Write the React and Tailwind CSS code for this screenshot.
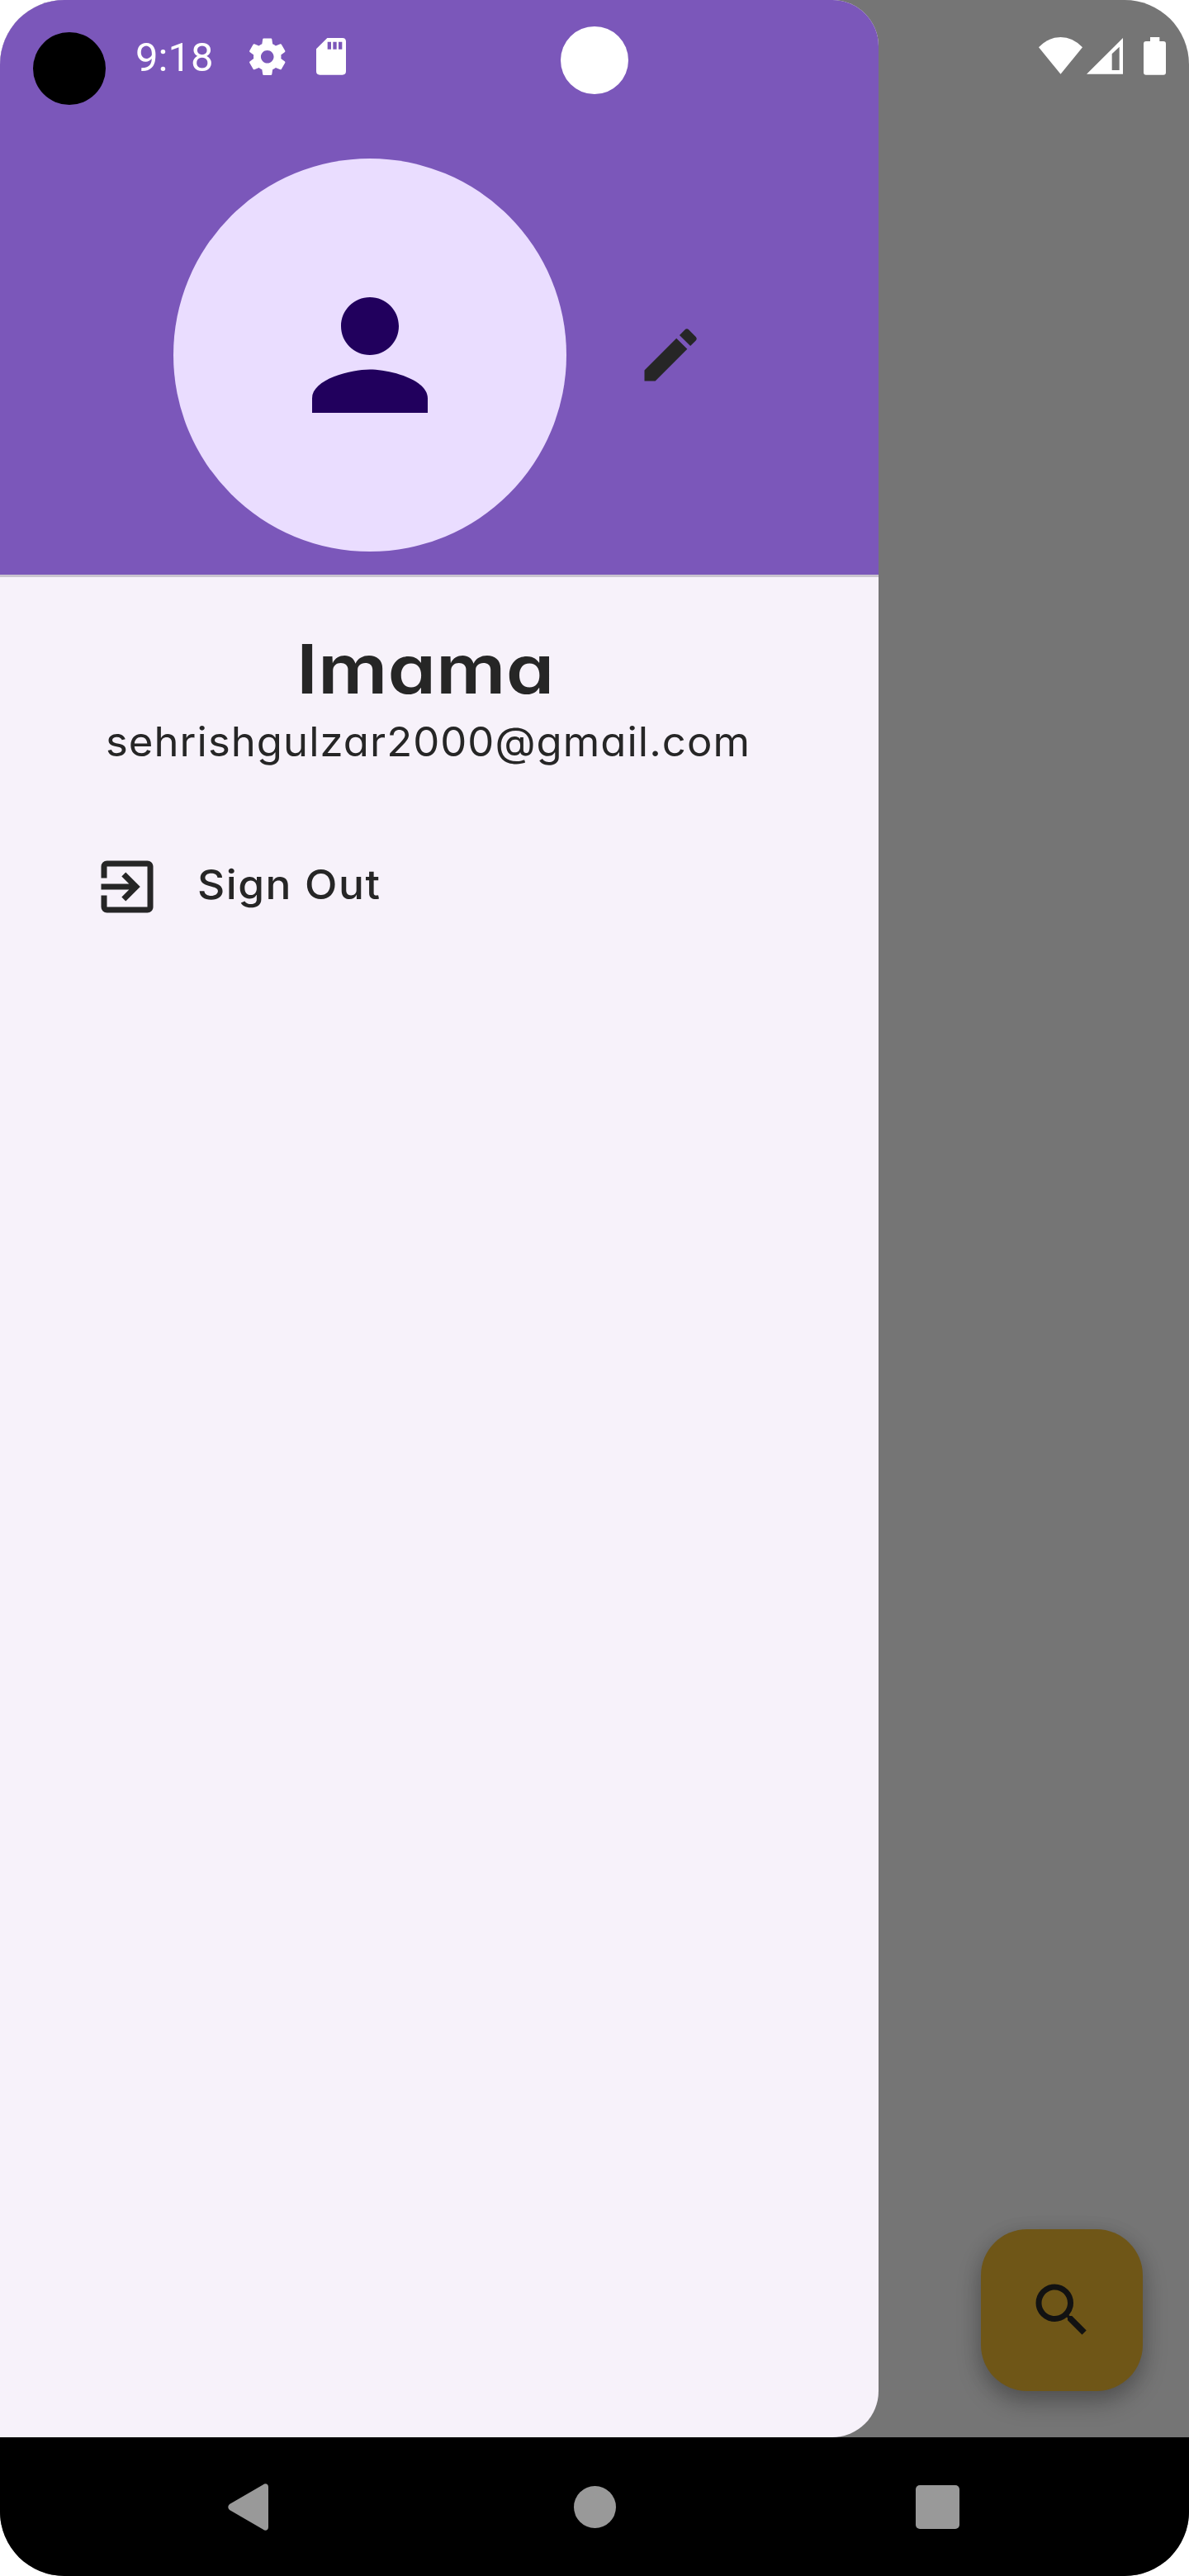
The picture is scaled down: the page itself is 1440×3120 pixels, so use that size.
const Icon = ({ d, className }) => (
  <svg viewBox="0 0 24 24" className={className} fill="currentColor" aria-hidden="true">
    <path d={d} />
  </svg>
);

const paths = {
  person:
    "M12 12c2.21 0 4-1.79 4-4s-1.79-4-4-4-4 1.79-4 4 1.79 4 4 4zm0 2c-2.67 0-8 1.34-8 4v2h16v-2c0-2.66-5.33-4-8-4z",
  edit: "M3 17.25V21h3.75L17.81 9.94l-3.75-3.75L3 17.25zM20.71 7.04a.996.996 0 0 0 0-1.41l-2.34-2.34a.996.996 0 0 0-1.41 0l-1.83 1.83 3.75 3.75 1.83-1.83z",
  exit: "M10.09 15.59L11.5 17l5-5-5-5-1.41 1.41L12.67 11H3v2h9.67l-2.58 2.59zM19 3H5a2 2 0 0 0-2 2v4h2V5h14v14H5v-4H3v4a2 2 0 0 0 2 2h14c1.1 0 2-.9 2-2V5c0-1.1-.9-2-2-2z",
  search:
    "M15.5 14h-.79l-.28-.27A6.471 6.471 0 0 0 16 9.5 6.5 6.5 0 1 0 9.5 16c1.61 0 3.09-.59 4.23-1.57l.27.28v.79l5 4.99L20.49 19l-4.99-5zm-6 0C7.01 14 5 11.99 5 9.5S7.01 5 9.5 5 14 7.01 14 9.5 11.99 14 9.5 14z",
  gear: "M19.43 12.98c.04-.32.07-.64.07-.98s-.03-.66-.07-.98l2.11-1.65c.19-.15.24-.42.12-.64l-2-3.46c-.12-.22-.39-.3-.61-.22l-2.49 1c-.52-.4-1.08-.73-1.69-.98l-.38-2.65A.488.488 0 0 0 14 2h-4c-.25 0-.46.18-.49.42l-.38 2.65c-.61.25-1.17.59-1.69.98l-2.49-1c-.23-.09-.49 0-.61.22l-2 3.46c-.13.22-.07.49.12.64l2.11 1.65c-.04.32-.07.65-.07.98s.03.66.07.98l-2.11 1.65c-.19.15-.24.42-.12.64l2 3.46c.12.22.39.3.61.22l2.49-1c.52.4 1.08.73 1.69.98l.38 2.65c.03.24.24.42.49.42h4c.25 0 .46-.18.49-.42l.38-2.65c.61-.25 1.17-.59 1.69-.98l2.49 1c.23.09.49 0 .61-.22l2-3.46c.12-.22.07-.49-.12-.64l-2.11-1.65zM12 15.5c-1.93 0-3.5-1.57-3.5-3.5s1.57-3.5 3.5-3.5 3.5 1.57 3.5 3.5-1.57 3.5-3.5 3.5z",
};

function StatusBar() {
  return (
    <div className="absolute inset-x-0 top-0 flex h-[136px] items-start text-white">
      <div className="ml-10 mt-[39px] size-[88px] rounded-full bg-black" />
      <span className="ml-[36px] mt-[41px] w-[95px] font-['Roboto',sans-serif] text-[49px] leading-[57px]">
        9:18
      </span>
      <Icon d={paths.gear} className="ml-[38px] mt-[41.5px] size-[53.5px] shrink-0" />
      <svg viewBox="0 0 108 134" className="ml-[32px] mt-[46px] h-[44.7px] w-[36px] shrink-0" fill="currentColor">
        <path
          fillRule="evenodd"
          d="M40 0H95Q108 0 108 13V121Q108 134 95 134H13Q0 134 0 121V40ZM41 14V41H54V14ZM61 14V41H74V14ZM81 14V41H94V14Z"
        />
      </svg>
      <div className="ml-[260.5px] mt-8 size-[82px] rounded-full bg-white" />
      <div className="ml-auto mt-[45px] flex pr-7">
        <svg viewBox="0 0 159 134" className="h-[44.7px] w-[53px]" fill="currentColor">
          <path d="M0 37Q35 0 79.500 0T159 37L79.500 134Z" />
        </svg>
        <svg viewBox="0 0 134 134" className="ml-[4.500px] h-[44.7px] w-[44.7px]" fill="currentColor">
          <path fillRule="evenodd" d="M134 1V134H0ZM119 35 92 61V120H119Z" />
        </svg>
        <svg viewBox="0 0 81 137" className="ml-[24.800px] h-[45.7px] w-[27px]" fill="currentColor">
          <path d="M24 0H58V15H72Q81 15 81 24V128Q81 137 72 137H9Q0 137 0 128V24Q0 15 9 15H24Z" />
        </svg>
      </div>
    </div>
  );
}

function Drawer() {
  return (
    <aside className="flex w-[1064px] flex-col items-start overflow-hidden rounded-r-[56px] bg-[#f7f2fa] font-['Inter',sans-serif] text-[#262626] [font-feature-settings:'cv11']">
      <header className="flex h-[699px] w-full shrink-0 items-start border-b-[3px] border-[#cac4d0] bg-[#7b57ba] pl-[210px] pt-48">
        <div className="flex size-[476px] items-center justify-center rounded-full bg-[#eaddff] text-[#21005d]">
          <Icon d={paths.person} className="size-[210px]" />
        </div>
        <button className="ml-[84px] mt-[196px]" aria-label="Edit profile">
          <Icon d={paths.edit} className="size-[84px]" />
        </button>
      </header>
      <h1 className="ml-[359px] mt-[62px] origin-left scale-x-[1.145] whitespace-nowrap text-[82px] font-semibold leading-[100px]">
        Imama
      </h1>
      <p className="ml-[128px] mt-[8px] origin-left scale-x-[1.037] whitespace-nowrap text-[49px] leading-[60px] tracking-[1px]">
        sehrishgulzar2000@gmail.com
      </p>
      <button className="ml-28 mt-[103px] flex h-[84px] items-center text-left">
        <Icon d={paths.exit} className="size-[84px]" />
        <span className="mb-1 ml-[43px] origin-left scale-x-[1.05] whitespace-nowrap text-[49px] font-medium leading-[60px] tracking-[1.4px]">
          Sign Out
        </span>
      </button>
    </aside>
  );
}

function NavBar() {
  return (
    <nav className="flex h-[168px] shrink-0 items-center bg-black pl-[276px] text-[#999999]">
      <svg viewBox="0 0 49 57" className="h-[57px] w-[49px]" fill="currentColor">
        <path d="M42.500 1.500C45.500-1 49 .500 49 4V53C49 56.500 45.500 58 42.500 55.500L2 32Q-1.500 28.500 2 25Z" />
      </svg>
      <div className="ml-[369.5px] size-[51px] rounded-full bg-[#999999]" />
      <div className="ml-[363px] size-[53px] rounded-[5px] bg-[#999999]" />
    </nav>
  );
}

export default function App() {
  return (
    <div className="h-[3120px] w-[1440px] bg-white">
      <div className="relative flex h-full flex-col overflow-hidden rounded-[78px] bg-[#757575]">
        <main className="flex h-[2952px] shrink-0">
          <Drawer />
          <div className="flex flex-1 items-end justify-end pb-14 pr-14">
            <button
              aria-label="Search"
              className="flex size-[196px] items-center justify-center rounded-[56px] bg-[#6f5617] text-[#121212] shadow-[0_14px_30px_rgba(0,0,0,0.24),0_5px_24px_rgba(0,0,0,0.12)]"
            >
              <Icon d={paths.search} className="size-[84px]" />
            </button>
          </div>
        </main>
        <NavBar />
        <StatusBar />
      </div>
    </div>
  );
}
